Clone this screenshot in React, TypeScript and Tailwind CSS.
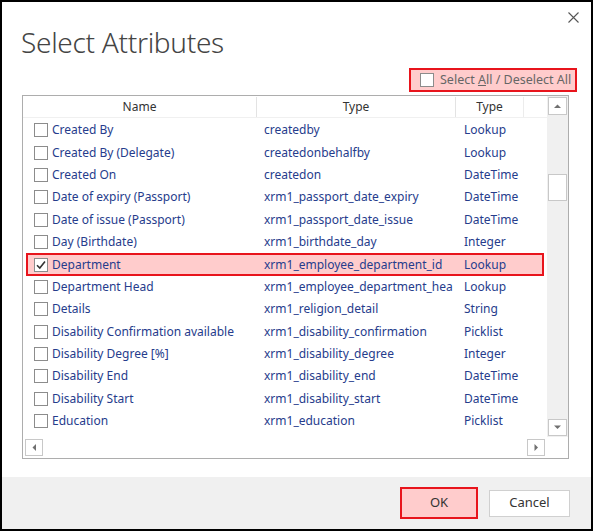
import React from "react";

type Row = { name: string; field: string; type: string; checked?: boolean; partial?: boolean };

const rows: Row[] = [
  { name: "Created By", field: "createdby", type: "Lookup" },
  { name: "Created By (Delegate)", field: "createdonbehalfby", type: "Lookup" },
  { name: "Created On", field: "createdon", type: "DateTime" },
  { name: "Date of expiry (Passport)", field: "xrm1_passport_date_expiry", type: "DateTime" },
  { name: "Date of issue (Passport)", field: "xrm1_passport_date_issue", type: "DateTime" },
  { name: "Day (Birthdate)", field: "xrm1_birthdate_day", type: "Integer" },
  { name: "Department", field: "xrm1_employee_department_id", type: "Lookup", checked: true },
  { name: "Department Head", field: "xrm1_employee_department_hea", type: "Lookup" },
  { name: "Details", field: "xrm1_religion_detail", type: "String" },
  { name: "Disability Confirmation available", field: "xrm1_disability_confirmation", type: "Picklist" },
  { name: "Disability Degree [%]", field: "xrm1_disability_degree", type: "Integer" },
  { name: "Disability End", field: "xrm1_disability_end", type: "DateTime" },
  { name: "Disability Start", field: "xrm1_disability_start", type: "DateTime" },
  { name: "Education", field: "xrm1_education", type: "Picklist" },
  { name: "", field: "", type: "", partial: true },
];

function Check({ checked }: { checked?: boolean }) {
  return (
    <div className="w-[14px] h-[14px] border border-[#8c8c8c] bg-white shrink-0 flex items-center justify-center">
      {checked && (
        <svg width="12" height="12" viewBox="0 0 12 12">
          <path d="M2 6.2 L4.8 9 L10 2.5" fill="none" stroke="#333" strokeWidth="1.6" />
        </svg>
      )}
    </div>
  );
}

function Arrow({ dir }: { dir: "up" | "down" | "left" | "right" }) {
  const pts =
    dir === "up"
      ? "1,5 4.5,1.5 8,5"
      : dir === "down"
      ? "1,1.5 4.5,5 8,1.5"
      : dir === "left"
      ? "5,1 1.5,4.5 5,8"
      : "1.5,1 5,4.5 1.5,8";
  const w = dir === "up" || dir === "down" ? 9 : 7;
  const h = dir === "up" || dir === "down" ? 7 : 9;
  return (
    <svg width={w} height={h} viewBox={`0 0 ${w} ${h}`}>
      <polygon points={pts} fill="#707070" />
    </svg>
  );
}

export default function App() {
  return (
    <div
      className="w-[593px] h-[531px] border-2 border-black bg-white flex flex-col relative"
      style={{ fontFamily: '"Segoe UI", "Noto Sans", "Open Sans", sans-serif' }}
    >
      <div className="absolute top-[10px] right-[12px]">
        <svg width="11" height="11" viewBox="0 0 11 11">
          <path d="M0.5 0.5 L10.5 10.5 M10.5 0.5 L0.5 10.5" stroke="#555" strokeWidth="1.1" />
        </svg>
      </div>
      <div className="h-[64px] pl-[19px] pt-[22px]">
        <div className="text-[28px] leading-[36px] font-light text-[#444] tracking-[-0.3px]">Select Attributes</div>
      </div>
      <div className="h-[24px] mt-[2px] flex justify-end pr-[14px]">
        <div className="w-[168px] h-[24px] border-2 border-[#e8141c] bg-[#ffcccc] flex items-center pl-[9px] gap-[6px]">
          <Check />
          <span className="text-[12.5px] text-[#666] whitespace-nowrap">
            Select <span className="underline">A</span>ll / Deselect All
          </span>
        </div>
      </div>
      <div className="mt-[3px] ml-[20px] w-[547px] h-[364px] border border-[#adadad] flex flex-col">
        <div className="flex h-[341px]">
          <div className="w-[524px] flex flex-col">
            <div className="h-[22px] flex text-[12px] text-[#333] bg-white border-b border-[#f0f0f0] pr-[2px] pt-[1px]">
              <div className="w-[234px] flex items-center justify-center border-r border-[#e3e3e3]">Name</div>
              <div className="w-[199px] flex items-center justify-center border-r border-[#e3e3e3]">Type</div>
              <div className="w-[68px] flex items-center justify-center border-r border-[#ececec]">Type</div>
              <div className="flex-1" />
            </div>
            <div className="h-[319px] overflow-hidden px-[3px] pt-[1px]">
              {rows.map((r, i) => (
                <div
                  key={i}
                  className={`h-[22.4px] flex items-center border-2 text-[12px] text-[#263c8c] whitespace-nowrap ${
                    r.checked ? "border-[#e8141c] bg-[#ffcccc]" : "border-transparent"
                  }`}
                >
                  <div className="w-[229px] pl-[6px] flex items-center gap-[4px] shrink-0">
                    <Check checked={r.checked} />
                    {r.name && <span>{r.name}</span>}
                  </div>
                  {!r.partial && (
                    <>
                      <div className="w-[200px] pl-[7px] overflow-hidden shrink-0">{r.field}</div>
                      <div className="pl-[7px]">{r.type}</div>
                    </>
                  )}
                </div>
              ))}
            </div>
          </div>
          <div className="w-[21px] bg-[#f0f0f0] flex flex-col items-center pt-[1px] pb-[1px]">
            <div className="w-[19px] h-[18px] border border-[#c8c8c8] bg-white flex items-center justify-center">
              <Arrow dir="up" />
            </div>
            <div className="h-[59px]" />
            <div className="w-[19px] h-[27px] border border-[#c8c8c8] bg-white" />
            <div className="flex-1" />
            <div className="w-[19px] h-[17px] border border-[#c8c8c8] bg-white flex items-center justify-center">
              <Arrow dir="down" />
            </div>
          </div>
        </div>
        <div className="flex-1 flex bg-white">
          <div className="w-[524px] flex items-center justify-between px-[1px]">
            <div className="w-[18px] h-[17px] border border-[#c8c8c8] bg-white flex items-center justify-center ml-[1px]">
              <Arrow dir="left" />
            </div>
            <div className="w-[18px] h-[17px] border border-[#c8c8c8] bg-white flex items-center justify-center mr-[1px]">
              <Arrow dir="right" />
            </div>
          </div>
        </div>
      </div>
      <div className="mt-[18px] flex-1 bg-[#f0f0f0] flex items-center justify-end pr-[21px] gap-[11px]">
        <div className="w-[78px] h-[32px] border-2 border-[#e8141c] bg-[#ffcccc] flex items-center justify-center text-[13px] text-[#333]">
          OK
        </div>
        <div className="w-[81px] h-[27px] border border-[#d0d0d0] bg-white flex items-center justify-center text-[13px] text-[#333]">
          Cancel
        </div>
      </div>
    </div>
  );
}
